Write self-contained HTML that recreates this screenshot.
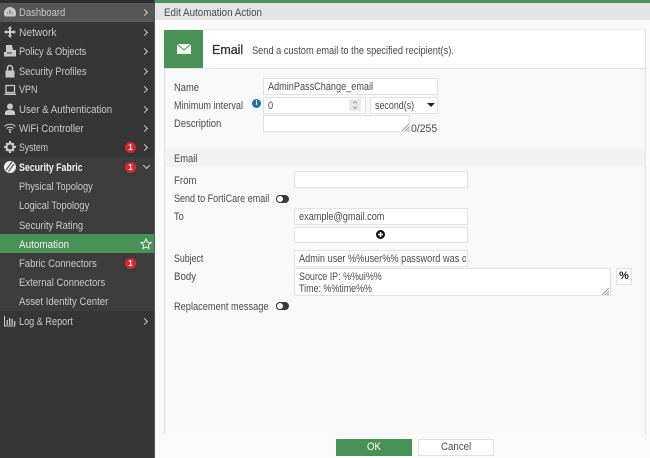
<!DOCTYPE html>
<html><head><meta charset="utf-8"><style>
html,body{margin:0;padding:0}
body{width:650px;height:458px;overflow:hidden;position:relative;background:#fafafa;font:11px/14px "Liberation Sans",sans-serif;color:#444;filter:blur(.3px)}
div,svg.i{position:absolute}
.t{white-space:nowrap;position:absolute;margin-top:1px;transform:scaleX(var(--s,.84));transform-origin:0 0}
.n{left:19px;color:#c9c9c9;line-height:14px}
.in{background:#fff;border:1px solid #e2e2e2;box-sizing:border-box}
.l{left:174px;color:#4a4a4a}
.v{color:#4a4a4a}
.ar{left:142px;width:4px;height:4px;border-top:1.5px solid #ccc;border-right:1.5px solid #ccc;transform:rotate(45deg)}
.b{left:125px;width:11px;height:11px;border-radius:50%;background:#d9272b;color:#fff;font:bold 8px/11px "Liberation Sans",sans-serif;text-align:center}
.tg{left:276px;width:13px;height:8px;border-radius:4px;background:#3a3a3a}
.tg:after{content:"";position:absolute;left:0;top:0;width:6px;height:6px;border-radius:50%;background:#fff;border:1px solid #3a3a3a}
svg.i{left:3px;width:14px;height:14px;fill:#c9c9c9}
.bt span{display:inline-block;transform:scaleX(.88)}
</style></head><body>
<div style="left:0;top:0;width:155px;height:458px;background:#363636"></div>
<div style="left:0;top:0;width:155px;height:3px;background:#2e2e2e"></div>
<div style="left:0;top:3px;width:154px;height:19px;background:#565656"></div>
<div style="left:0;top:157px;width:154px;height:154px;background:#3d3d3d"></div>
<div style="left:0;top:234px;width:154px;height:19px;background:#4a9158"></div>
<div style="left:154px;top:0;width:1px;height:458px;background:#555"></div>

<svg class="i" style="top:5px" viewBox="0 0 14 14"><path d="M7 2a6 6 0 0 0-6 6c0 1.500.4 2.700 1 3.500h10c.6-.8 1-2 1-3.500a6 6 0 0 0-6-6z"/><path d="M7 5v4M4 8h1M9 8h1" stroke="#565656" fill="none"/></svg>
<span class="t n" style="top:5px;--s:.86">Dashboard</span><div class="ar" style="top:10px"></div>

<svg class="i" style="top:25px" viewBox="0 0 14 14"><path d="M7 1l2.200 2.500H8V6h2.500V4.800L13 7l-2.500 2.200V8H8v2.500h1.200L7 13l-2.200-2.500H6V8H3.500v1.200L1 7l2.500-2.200V6H6V3.500H4.800z"/></svg>
<span class="t n" style="top:25px;--s:.93">Network</span><div class="ar" style="top:30px"></div>

<svg class="i" style="top:44px" viewBox="0 0 14 14"><path d="M3 1h6l1 5h3v6.500H1V8h2z"/><path d="M4 9h5" stroke="#363636"/></svg>
<span class="t n" style="top:44px">Policy &amp; Objects</span><div class="ar" style="top:49px"></div>

<svg class="i" style="top:64px" viewBox="0 0 14 14"><path d="M2.500 6.500h9v7h-9z"/><path d="M4.500 6.500V4a2.500 2.500 0 0 1 5 0v2.500" fill="none" stroke="#c9c9c9" stroke-width="1.500"/></svg>
<span class="t n" style="top:64px;--s:.85">Security Profiles</span><div class="ar" style="top:69px"></div>

<svg class="i" style="top:83px" viewBox="0 0 14 14"><path d="M3 2.500h8.500v7H3z" fill="none" stroke="#c9c9c9" stroke-width="1.300"/><path d="M1.500 10.500h11.500v1.500H1.500z"/></svg>
<span class="t n" style="top:82px;--s:.82">VPN</span><div class="ar" style="top:87px"></div>

<svg class="i" style="top:102px" viewBox="0 0 14 14"><circle cx="7" cy="4.500" r="3"/><path d="M2 13v-2.500C2 9 4 8 7 8s5 1 5 2.500V13z"/></svg>
<span class="t n" style="top:102px;--s:.88">User &amp; Authentication</span><div class="ar" style="top:107px"></div>

<svg class="i" style="top:121px" viewBox="0 0 14 14"><path d="M1.500 5.500c3-3 8-3 11 0M3.500 7.500c2-1.800 5-1.800 7 0M5.500 9.300c1-.8 2-.8 3 0" fill="none" stroke="#c9c9c9" stroke-width="1.100"/><circle cx="7" cy="11" r="1"/></svg>
<span class="t n" style="top:121px;--s:.89">WiFi Controller</span><div class="ar" style="top:126px"></div>

<svg class="i" style="top:140px" viewBox="0 0 14 14"><circle cx="7" cy="7" r="3.500" fill="none" stroke="#c9c9c9" stroke-width="2.200"/><path d="M6 1h2v2.500H6zM6 10.500h2V13H6zM1 6h2.500v2H1zM10.500 6H13v2h-2.500zM2.500 3.900l1.400-1.400 1.800 1.800-1.400 1.400zM8.300 9.700l1.400-1.400 1.800 1.800-1.400 1.400zM2.500 10.100l1.800-1.800 1.400 1.400-1.800 1.800zM8.300 4.300l1.800-1.800 1.400 1.400-1.800 1.800z"/></svg>
<span class="t n" style="top:140px;--s:.79">System</span><div class="b" style="top:142px">1</div><div class="ar" style="top:145px"></div>

<svg class="i" style="top:160px" viewBox="0 0 14 14"><circle cx="7" cy="7" r="6" fill="#eee"/><path d="M3 10L9 2M5.500 11.500L11 4" stroke="#555" stroke-width="1.100"/></svg>
<span class="t n" style="top:160px;color:#f2f2f2;font-weight:bold;--s:.80">Security Fabric</span><div class="b" style="top:162px">1</div><div class="ar" style="top:163px;left:144px;transform:rotate(135deg)"></div>

<span class="t n" style="top:179px">Physical Topology</span>
<span class="t n" style="top:198px;--s:.86">Logical Topology</span>
<span class="t n" style="top:218px;--s:.86">Security Rating</span>
<span class="t n" style="top:237px;color:#f2f2f2;--s:.90">Automation</span>
<svg class="i" style="left:140px;top:238px;width:12px;height:12px" viewBox="0 0 12 12"><path d="M6 1l1.500 3.300 3.500.4-2.600 2.400.7 3.500L6 8.900l-3.100 1.700.7-3.500L1 4.700l3.500-.4z" fill="none" stroke="#eee"/></svg>
<span class="t n" style="top:256px;--s:.865">Fabric Connectors</span><div class="b" style="top:258px">1</div>
<span class="t n" style="top:275px;--s:.865">External Connectors</span>
<span class="t n" style="top:294px;--s:.875">Asset Identity Center</span>

<svg class="i" style="top:314px" viewBox="0 0 14 14"><path d="M1.500 2v10h11" fill="none" stroke="#c9c9c9"/><path d="M3.500 6h1.300v5H3.500zM6 4h1.300v7H6zM8.500 5h1.300v6H8.500zM11 7h1.300v4H11z"/></svg>
<span class="t n" style="top:314px;--s:.83">Log &amp; Report</span><div class="ar" style="top:319px"></div>

<div style="left:155px;top:0;width:495px;height:3px;background:#4a9158"></div>
<div style="left:155px;top:3px;width:495px;height:17px;background:#e4e4e4"></div>
<span class="t v" style="left:164px;top:5px;--s:.89">Edit Automation Action</span>

<div style="left:164px;top:30px;width:482px;height:404px;background:#f9f9f9;border-right:1px solid #e2e2e2;border-left:1px solid #e2e2e2;box-sizing:border-box"></div>
<div style="left:164px;top:29px;width:482px;height:40px;background:#fff;border-top:1px solid #eee;border-bottom:1px solid #e2e2e2;border-right:1px solid #e2e2e2;box-sizing:border-box"></div>
<div style="left:164px;top:30px;width:39px;height:38px;background:#4a9158"></div>
<svg class="i" style="left:177px;top:44px;width:14px;height:10px" viewBox="0 0 14 10"><path d="M0 0h14v10H0z" fill="#f1f8ef"/><path d="M0 0l7 6 7-6" fill="none" stroke="#4a9158" stroke-width=".9"/></svg>
<span class="t" style="left:212px;top:42px;font-size:13px;color:#333;-webkit-text-stroke:.3px #333;--s:.96">Email</span>
<span class="t v" style="left:252px;top:43px">Send a custom email to the specified recipient(s).</span>

<span class="t l" style="top:80px;--s:.85">Name</span>
<div class="in" style="left:263px;top:78px;width:175px;height:17px"></div>
<span class="t v" style="left:268px;top:79px;--s:.83">AdminPassChange_email</span>

<span class="t l" style="top:98px;--s:.83">Minimum interval</span>
<div style="left:252px;top:99px;width:9px;height:9px;border-radius:50%;background:#1c6fb0;color:#fff;font:bold 7px/9px 'Liberation Serif',serif;text-align:center">i</div>
<div class="in" style="left:263px;top:97px;width:103px;height:17px"></div>
<span class="t v" style="left:268px;top:98px">0</span>
<div style="left:349px;top:99px;width:12px;height:12px;background:#e8e8e8"></div>
<svg class="i" style="left:351px;top:100px;width:8px;height:10px" viewBox="0 0 8 10"><path d="M2 3.500L4 1.500 6 3.500M2 6.500L4 8.500 6 6.500" fill="none" stroke="#888" stroke-width=".8"/></svg>
<div class="in" style="left:370px;top:97px;width:68px;height:17px"></div>
<span class="t v" style="left:375px;top:98px;--s:.81">second(s)</span>
<div style="left:427px;top:103px;border:4px solid transparent;border-top:4px solid #222;border-bottom:0"></div>

<span class="t l" style="top:116px;--s:.86">Description</span>
<div class="in" style="left:263px;top:115px;width:147px;height:17px"></div>
<svg class="i" style="left:401px;top:124px;width:8px;height:7px" viewBox="0 0 8 7"><path d="M1 7l7-7M4 7l4-4M6.500 7L8 5.500" stroke="#999" fill="none"/></svg>
<span class="t v" style="left:411px;top:121px;--s:.95">0/255</span>

<div style="left:165px;top:148px;width:480px;height:19px;background:#f2f2f2"></div>
<span class="t v" style="left:174px;top:151px;--s:.85">Email</span>

<span class="t l" style="top:173px;--s:.88">From</span>
<div class="in" style="left:294px;top:171px;width:174px;height:17px"></div>

<span class="t l" style="top:191px;--s:.82">Send to FortiCare email</span>
<div class="tg" style="top:195px"></div>

<span class="t l" style="top:209px">To</span>
<div class="in" style="left:294px;top:208px;width:174px;height:17px"></div>
<span class="t v" style="left:299px;top:209px;--s:.83">example@gmail.com</span>
<div class="in" style="left:294px;top:227px;width:174px;height:16px"></div>
<svg class="i" style="left:376px;top:230px;width:9px;height:9px" viewBox="0 0 9 9"><circle cx="4.500" cy="4.500" r="4.500" fill="#111"/><path d="M4.500 2v5M2 4.500h5" stroke="#fff" stroke-width="1.500"/></svg>

<div class="in" style="left:294px;top:250px;width:174px;height:17px"></div>
<span class="t l" style="top:251px;--s:.80">Subject</span>
<span class="t v" style="left:299px;top:251px;--s:.835">Admin user %%user%% password was c</span>

<span class="t l" style="top:269px;--s:.88">Body</span>
<div class="in" style="left:294px;top:268px;width:317px;height:28px"></div>
<span class="t v" style="left:299px;top:271px;line-height:11.5px;--s:.81">Source IP: %%ui%%<br>Time: %%time%%</span>
<svg class="i" style="left:601px;top:287px;width:8px;height:8px" viewBox="0 0 8 8"><path d="M1 8l7-7M4 8l4-4M6.500 8L8 6.500" stroke="#999" fill="none"/></svg>
<div class="in" style="left:616px;top:268px;width:16px;height:17px;text-align:center;font:bold 11px/15px 'Liberation Sans',sans-serif;color:#222">%</div>

<span class="t l" style="top:299px">Replacement message</span>
<div class="tg" style="top:302px"></div>

<div class="bt" style="left:336px;top:439px;width:76px;height:17px;background:#4a9158;color:#fff;text-align:center;line-height:17px"><span>OK</span></div>
<div class="in bt" style="left:418px;top:439px;width:76px;height:17px;text-align:center;line-height:15px;color:#4a4a4a"><span>Cancel</span></div>
</body></html>
